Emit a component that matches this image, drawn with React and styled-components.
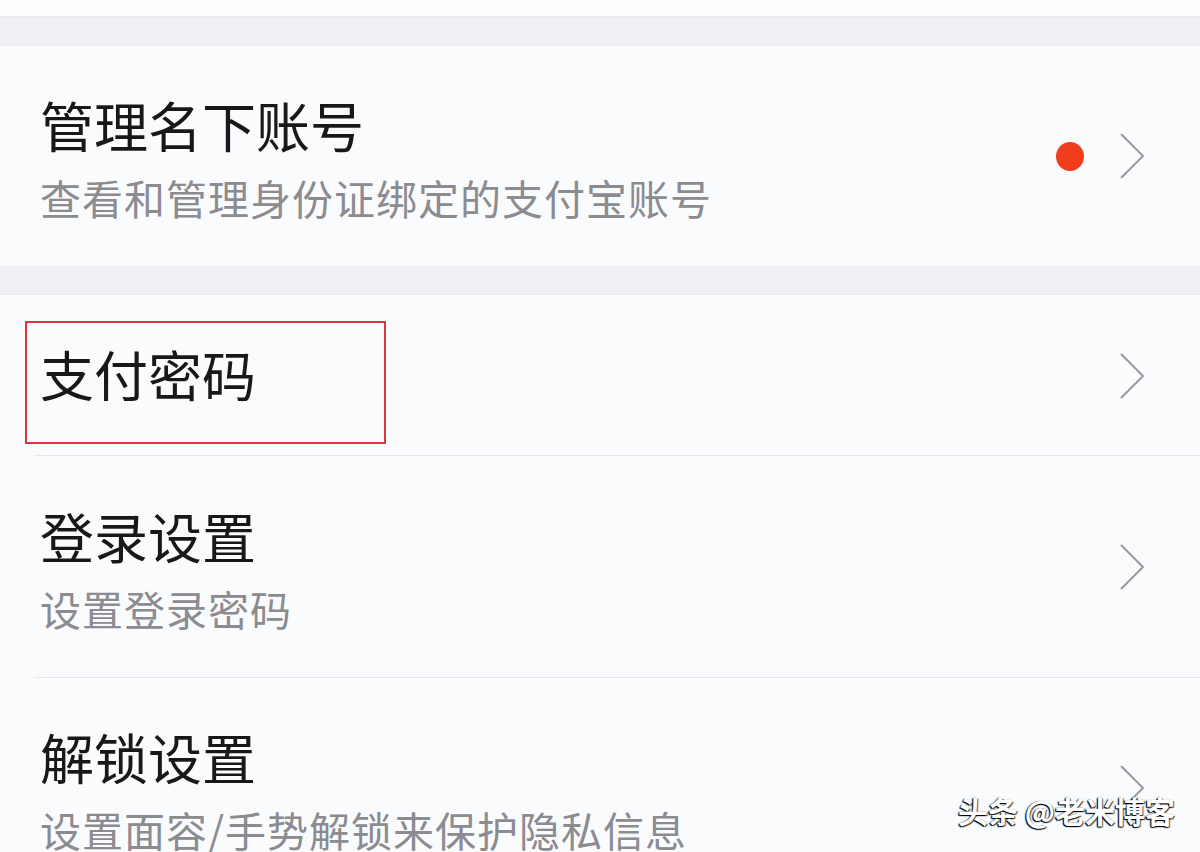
import React from "react";
import styled, { createGlobalStyle } from "styled-components";

const Global = createGlobalStyle`
  html, body { margin: 0; padding: 0; height: 852px; overflow: hidden; background: #fafbfd; }
  body { font-family: "Noto Sans CJK SC", "Noto Sans", sans-serif; }
`;

const Page = styled.div`
  position: relative;
  width: 1200px;
  height: 852px;
  overflow: hidden;
  background: #fafbfd;
`;

const Strip = styled.div`
  height: 16px;
  background: #fdfdfe;
  border-bottom: 1px solid #e9eaed;
`;

const Gap = styled.div`
  height: 28px;
  background: #eff0f3;
  border-bottom: 1px solid #e8e9ec;
`;

const Section = styled.section`
  background: #fafbfd;
`;

const Row = styled.div`
  position: relative;
  display: flex;
  align-items: center;
  min-height: ${({ $h }) => $h}px;
  box-sizing: border-box;
  padding: 0 55px 0 40px;
  &:not(:last-child)::after {
    content: "";
    position: absolute;
    left: 34px;
    right: 0;
    bottom: 0;
    height: 1px;
    background: #e6e7eb;
  }
`;

const Texts = styled.div`
  flex: 1;
  display: flex;
  flex-direction: column;
  padding-top: 48px;
  padding-bottom: ${({ $pb }) => $pb}px;
`;

const Title = styled.div`
  font-size: 54px;
  line-height: 60px;
  color: #18181a;
  white-space: nowrap;
`;

const Sub = styled.div`
  margin-top: 17px;
  font-size: 41px;
  letter-spacing: 1px;
  line-height: 50px;
  color: #8b8b90;
  white-space: nowrap;
`;

const Dot = styled.span`
  width: 28px;
  height: 29px;
  border-radius: 50%;
  background: #f23d1c;
  margin-right: 35px;
`;

const Chevron = styled.svg`
  width: 26px;
  height: 48px;
  flex: none;
`;

const Mark = styled.div`
  position: absolute;
  left: 25px;
  top: 26px;
  width: 361px;
  height: 123px;
  box-sizing: border-box;
  border: 2px solid #d9363e;
  pointer-events: none;
`;

const Watermark = styled.div`
  position: absolute;
  right: 25px;
  bottom: 20px;
  font-size: 30px;
  font-weight: 700;
  color: #fff;
  text-shadow: -1px 1px 1px #000, 1px 1px 1px rgba(0, 0, 0, 0.7), -1px 0 1px rgba(0, 0, 0, 0.5);
`;

function Arrow() {
  return (
    <Chevron viewBox="0 0 26 48">
      <polyline points="2,2 24,24 2,46" fill="none" stroke="#9a9a9e" strokeWidth="2" />
    </Chevron>
  );
}

const rows = [
  { title: "支付密码", h: 161, mark: true },
  { title: "登录设置", sub: "设置登录密码", h: 222 },
  { title: "解锁设置", sub: "设置面容/手势解锁来保护隐私信息", h: 220 },
];

export default function App() {
  return (
    <Page>
      <Global />
      <Strip />
      <Gap />
      <Section>
        <Row $h={220}>
          <Texts $pb={44}>
            <Title>管理名下账号</Title>
            <Sub>查看和管理身份证绑定的支付宝账号</Sub>
          </Texts>
          <Dot />
          <Arrow />
        </Row>
      </Section>
      <Gap />
      <Section>
        {rows.map((r) => (
          <Row key={r.title} $h={r.h}>
            {r.mark ? <Mark /> : null}
            <Texts $pb={r.sub ? 44 : 51}>
              <Title>{r.title}</Title>
              {r.sub ? <Sub>{r.sub}</Sub> : null}
            </Texts>
            <Arrow />
          </Row>
        ))}
      </Section>
      <Watermark>头条 @老米博客</Watermark>
    </Page>
  );
}
